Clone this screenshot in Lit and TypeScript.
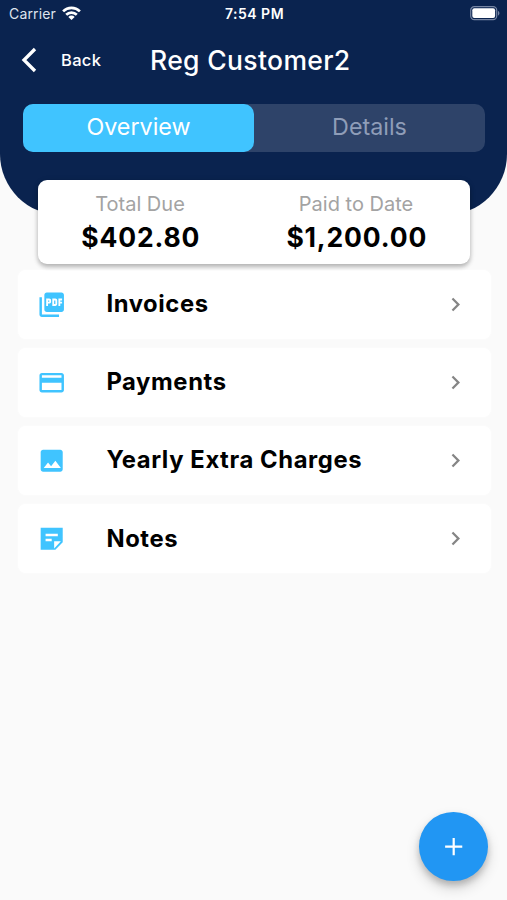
import { LitElement, html, css, svg } from "lit";
import { customElement } from "lit/decorators.js";

const icons = {
  pdf: svg`<path d="M20 2H8c-1.1 0-2 .9-2 2v12c0 1.1.9 2 2 2h12c1.1 0 2-.9 2-2V4c0-1.1-.9-2-2-2zm-8.500 7.500c0 .83-.67 1.500-1.500 1.500H9v2H7.500V7H10c.83 0 1.500.67 1.500 1.500v1zm5 2c0 .83-.67 1.500-1.500 1.500h-2.500V7H15c.83 0 1.500.67 1.500 1.500v3zm4-3H19v1h1.500V11H19v2h-1.500V7h3v1.500zM9 9.500h1v-1H9v1zM4 6H2v14c0 1.100.9 2 2 2h14v-2H4V6zm10 5.500h1v-3h-1v3z"/>`,
  card: svg`<path d="M20 4H4c-1.110 0-1.990.89-1.990 2L2 18c0 1.110.89 2 2 2h16c1.110 0 2-.89 2-2V6c0-1.110-.89-2-2-2zm0 14H4v-6h16v6zm0-10H4V6h16v2z"/>`,
  image: svg`<path d="M19 3H5c-1.100 0-2 .9-2 2v14c0 1.100.9 2 2 2h14c1.100 0 2-.9 2-2V5c0-1.100-.9-2-2-2zM5.500 18l3.500-4.500 2.500 3.010L15 12l4.500 6z"/>`,
  note: svg`<path fill-rule="evenodd" d="M3 3h18v12l-6 6H3zM7 8v2h10V8zm0 4v2h5v-2zm7 8l5.500-6H14z"/>`,
};

const rows = [
  { label: "Invoices", icon: icons.pdf },
  { label: "Payments", icon: icons.card },
  { label: "Yearly Extra Charges", icon: icons.image },
  { label: "Notes", icon: icons.note },
];

@customElement("app-root")
export class AppRoot extends LitElement {
  static styles = css`
    :host {
      display: block;
      position: relative;
      height: 900px;
      overflow: hidden;
      background: #fafafa;
      font-family: Inter, "Liberation Sans", sans-serif;
      color: #000;
    }
    * { box-sizing: border-box; }
    svg { display: block; fill: currentColor; flex: none; }
    .header {
      height: 215px;
      background: #0a234f;
      border-radius: 0 0 61px 61px;
      color: #fff;
    }
    .status {
      display: grid;
      grid-template-columns: 1fr auto 1fr;
      align-items: center;
      height: 27px;
      padding: 0 7px 0 9px;
      font-size: 14px;
      line-height: 20px;
    }
    .carrier { display: flex; align-items: center; gap: 6px; color: #dfe4ee; letter-spacing: 0.15px; }
    .carrier svg { color: #fff; }
    .time { font-weight: 600; font-size: 14px; letter-spacing: 0.5px; }
    .battery { justify-self: end; }
    .nav { display: flex; align-items: center; height: 65px; padding-left: 21px; }
    .back { margin-left: 24px; width: 89px; font-size: 16.500px; font-weight: 500; letter-spacing: 0.3px; }
    .title { font-size: 26.500px; font-weight: 500; letter-spacing: 0.35px; white-space: nowrap; }
    .tabs {
      display: flex;
      margin: 12px 22px 0 23px;
      height: 48px;
      border-radius: 10px;
      background: #2e4369;
      font-size: 23.300px;
      line-height: 46px;
      text-align: center;
    }
    .tab { flex: 1; color: #8f9db8; }
    .tab.active { background: #40c4ff; color: #fff; border-radius: 10px; }
    .summary {
      position: relative;
      display: flex;
      height: 84px;
      margin: -35.500px 37px 0 38px;
      padding-top: 10px;
      border-radius: 9px;
      background: #fff;
      box-shadow: 0 3px 4px rgba(0, 0, 0, 0.22), 0 1px 6px rgba(0, 0, 0, 0.12);
      text-align: center;
    }
    .cell { flex: 1; white-space: nowrap; }
    .cell.due { flex: 0 0 204px; }
    .label { font-size: 20px; line-height: 28px; color: #a3a3a3; }
    .amount { padding-left: 1.500px; font-size: 26.500px; line-height: 38px; font-weight: 650; letter-spacing: 0.850px; }
    .list {
      display: flex;
      flex-direction: column;
      gap: 9.500px;
      margin: 6.500px 16px 0 18px;
    }
    .row {
      display: flex;
      align-items: center;
      height: 68.600px;
      padding: 0 22px 0 19px;
      border-radius: 8px;
      background: #fff;
      box-shadow: 0 0 3px rgba(255, 255, 255, 0.9);
    }
    .row .icon { color: #40c4ff; }
    .name { flex: 1; margin: 0 0 1px 40px; font-size: 23.800px; font-weight: 700; letter-spacing: 0.6px; white-space: nowrap; }
    .chevron { color: #858585; }
    .fab {
      position: absolute;
      right: 19.400px;
      bottom: 19.400px;
      display: flex;
      align-items: center;
      justify-content: center;
      width: 68.600px;
      height: 68.600px;
      padding: 0;
      border: 0;
      border-radius: 50%;
      background: #2196f3;
      color: #fff;
      box-shadow: 0 4px 6px rgba(0, 0, 0, 0.18), 0 7px 14px rgba(0, 0, 0, 0.16);
    }
  `;

  render() {
    return html`
      <div class="header">
        <div class="status">
          <div class="carrier">
            <span>Carrier</span>
            <svg width="19" height="15" viewBox="0 0 19 15">
              <g fill="none" stroke="currentColor" stroke-width="2.700">
                <path d="M1.100 5.400a12 12 0 0 1 16.800 0" />
                <path d="M4.200 8.700a7.600 7.600 0 0 1 10.600 0" />
              </g>
              <path d="M9.500 14.100l-3.200-3.200a4.600 4.600 0 0 1 6.400 0z" />
            </svg>
          </div>
          <div class="time">7:54 PM</div>
          <svg class="battery" width="30" height="15" viewBox="0 0 30 15">
            <rect x=".7" y=".7" width="26" height="13" rx="3.600" fill="none" stroke="#7685a3" stroke-width="1.200" />
            <rect x="2.300" y="2.300" width="22.800" height="9.800" rx="2" />
            <path d="M28 5v4.500c1.900-.7 1.900-3.800 0-4.500z" fill="#7685a3" />
          </svg>
        </div>
        <div class="nav">
          <svg width="16" height="26" viewBox="0 0 16 26">
            <path d="M14 2L3 13l11 11" fill="none" stroke="currentColor" stroke-width="3.300" />
          </svg>
          <span class="back">Back</span>
          <span class="title">Reg Customer2</span>
        </div>
        <div class="tabs">
          <div class="tab active">Overview</div>
          <div class="tab">Details</div>
        </div>
      </div>
      <div class="summary">
        <div class="cell due">
          <div class="label">Total Due</div>
          <div class="amount">$402.80</div>
        </div>
        <div class="cell">
          <div class="label">Paid to Date</div>
          <div class="amount">$1,200.00</div>
        </div>
      </div>
      <div class="list">
        ${rows.map(
          (r) => html`
            <div class="row">
              <svg class="icon" width="29.400" height="29.400" viewBox="0 0 24 24">${r.icon}</svg>
              <span class="name">${r.label}</span>
              <svg class="chevron" width="27" height="27" viewBox="0 0 24 24">
                <path d="M10 6L8.590 7.410 13.170 12l-4.580 4.590L10 18l6-6z" />
              </svg>
            </div>
          `
        )}
      </div>
      <button class="fab" aria-label="Add">
        <svg width="29.400" height="29.400" viewBox="0 0 24 24">
          <path d="M19 12.900h-6.100V19h-1.800v-6.100H5v-1.800h6.100V5h1.800v6.100H19z" />
        </svg>
      </button>
    `;
  }
}
